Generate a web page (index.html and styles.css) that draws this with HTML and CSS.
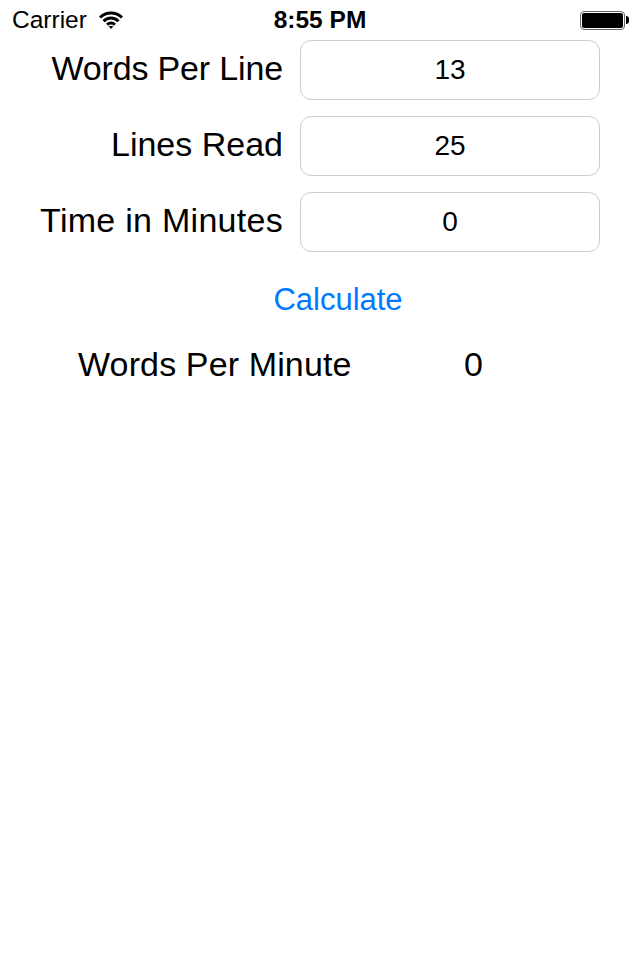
FILE: index.html
```html
<!DOCTYPE html>
<html lang="en">
    <head>
        <meta charset="UTF-8">
        <meta name="viewport" content="width=device-width, initial-scale=1.0">
        <title>Words Per Minute</title>
        <link rel="stylesheet" href="styles.css">
    </head>
    <body>
        <div class="status">
            <div class="status_left">
                <span>Carrier</span>
                <svg class="wifi" width="24" height="18" viewBox="0 0 24 18">
                    <path d="M1 6.5 A15.5 15.5 0 0 1 23 6.5" />
                    <path d="M4.6 10.2 A10.4 10.4 0 0 1 19.4 10.2" />
                    <path d="M8.1 13.7 A5.5 5.5 0 0 1 15.9 13.7" />
                    <polygon class="wifi_tip" points="9.6,15 14.4,15 12,18" />
                </svg>
            </div>
            <div class="status_time">8:55 PM</div>
            <div class="battery">
                <div class="battery_body"><div class="battery_fill"></div></div>
                <div class="battery_tip"></div>
            </div>
        </div>
        <div class="form">
            <div class="row">
                <label class="words">Words Per Line</label>
                <div class="field">13</div>
            </div>
            <div class="row">
                <label>Lines Read</label>
                <div class="field">25</div>
            </div>
            <div class="row">
                <label class="time">Time in Minutes</label>
                <div class="field">0</div>
            </div>
        </div>
        <div class="calc"><button>Calculate</button></div>
        <div class="result">
            <span class="result_label">Words Per Minute</span>
            <span class="result_value">0</span>
        </div>
    </body>
</html>
```

FILE: styles.css
```css
* {
    font-family: 'Liberation Sans', Arial, sans-serif;
    box-sizing: border-box;
}
body {
    margin: 0px;
    background: #ffffff;
    color: #000000;
}

/* status bar */
.status {
    display: flex;
    align-items: center;
    justify-content: space-between;
    height: 40px;
    padding: 0px 11px 0px 12px;
    position: relative;
    font-size: 24.5px;
}
.status_left {
    display: flex;
    align-items: center;
    gap: 12px;
}
.wifi path {
    fill: none;
    stroke: #000;
    stroke-width: 3px;
}
.wifi_tip {
    fill: #000;
}
.status_time {
    position: absolute;
    left: 0px;
    width: 100%;
    text-align: center;
    font-weight: bold;
}
.battery {
    display: flex;
    align-items: center;
}
.battery_body {
    width: 45px;
    height: 19px;
    border: 1px solid #666;
    border-radius: 4px;
    padding: 1px;
}
.battery_fill {
    width: 100%;
    height: 100%;
    background: #000;
    border-radius: 2px;
}
.battery_tip {
    width: 3px;
    height: 8px;
    background: #000;
    margin-left: 1px;
    border-radius: 0px 3px 3px 0px;
}

/* form */
.form {
    display: flex;
    flex-direction: column;
    gap: 16px;
}
.row {
    display: flex;
    align-items: center;
    justify-content: flex-end;
    gap: 17px;
    padding-right: 40px;
}
.row label {
    font-size: 34px;
    padding-bottom: 4px;
}
.row label.words {
    letter-spacing: -0.15px;
}
.row label.time {
    letter-spacing: 0.28px;
}
.field {
    width: 300px;
    height: 60px;
    border: 1px solid #cccccc;
    border-radius: 11px;
    display: flex;
    align-items: center;
    justify-content: center;
    font-size: 28px;
}

.calc {
    display: flex;
    justify-content: center;
    margin-top: 29px;
    padding-left: 36px;
}
.calc button {
    border: 0px transparent;
    background: transparent;
    padding: 0px;
    color: #007aff;
    font-size: 31px;
    line-height: 38px;
}

.result {
    display: flex;
    font-size: 34px;
    margin-top: 26px;
    padding-left: 78px;
}
.result_label {
    width: 386px;
    letter-spacing: 0.13px;
}
```
